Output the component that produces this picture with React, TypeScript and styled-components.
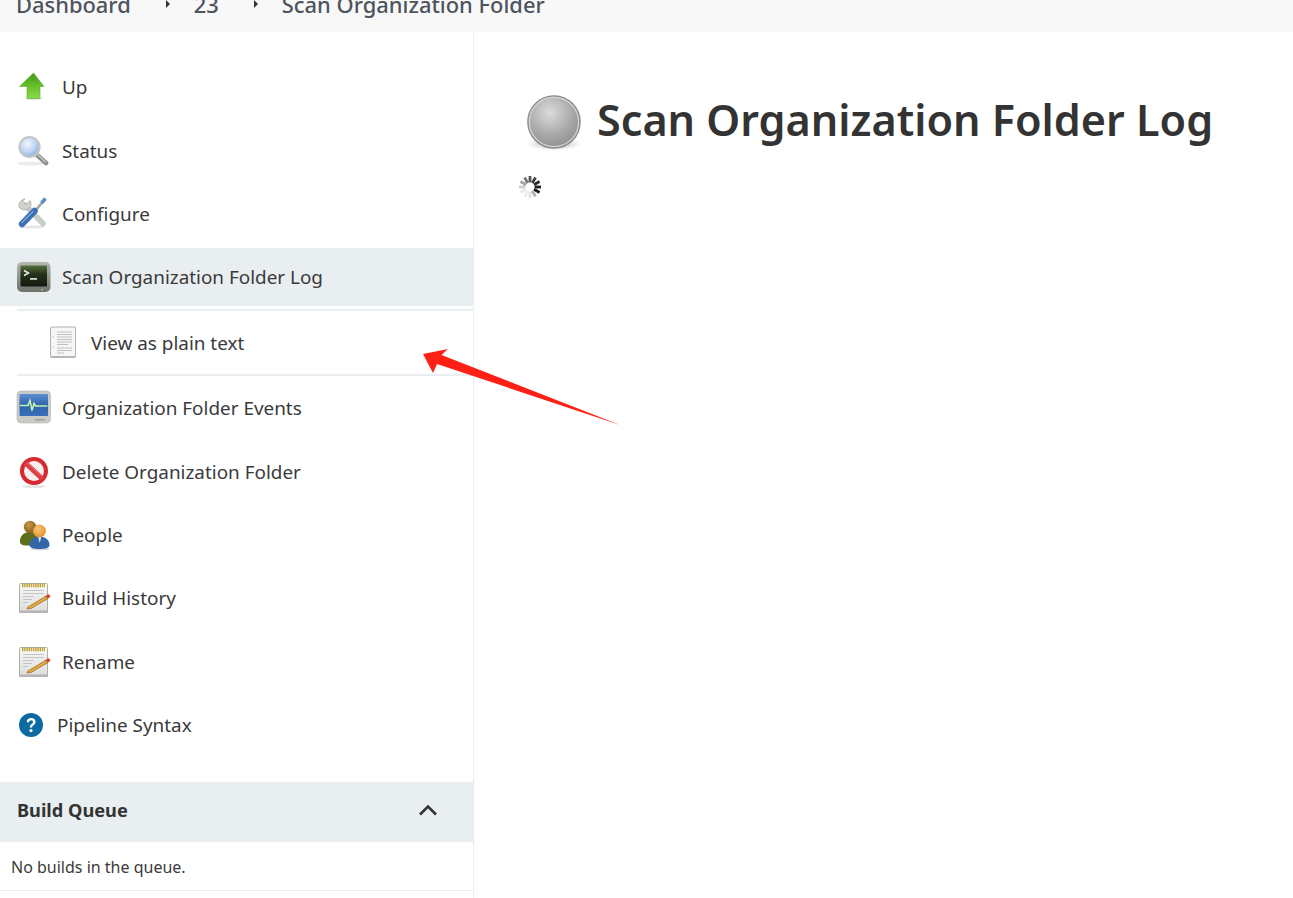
import React from 'react';
import styled, { createGlobalStyle } from 'styled-components';

const GlobalStyle = createGlobalStyle`
  html, body {
    margin: 0;
    height: 100%;
    overflow: hidden;
    background: #fff;
  }
  body {
    font-family: 'Noto Sans', 'Liberation Sans', sans-serif;
    color: #333;
  }
`;

const Page = styled.div`
  position: relative;
  width: 1293px;
  height: 898px;
  overflow: hidden;
`;

const Breadcrumbs = styled.div`
  height: 32px;
  box-sizing: border-box;
  background: #f8f8f8;
  display: flex;
  align-items: flex-end;
  padding: 0 0 11px 16px;
  font-size: 21.9px;
  font-weight: 500;
  line-height: 32px;
  color: #4d545d;
`;

const Crumb = styled.span`
  white-space: nowrap;
`;

const CrumbArrow = styled.span`
  align-self: flex-start;
  width: 0;
  height: 0;
  margin: 0 ${(p: { $after: number }) => p.$after}px 0 35px;
  border-left: 4px solid #333;
  border-top: 4px solid transparent;
  border-bottom: 4px solid transparent;
`;

const Main = styled.div`
  display: flex;
  height: 866px;
`;

const Sidebar = styled.aside`
  width: 474px;
  flex: none;
  box-sizing: border-box;
  border-right: 1px solid #e9eef1;
  padding-top: 26.2px;
`;

const Task = styled.div<{ $active?: boolean; $narrow?: boolean }>`
  height: ${(p) => (p.$narrow ? 57 : 58)}px;
  margin-bottom: 5.35px;
  display: flex;
  align-items: center;
  gap: ${(p) => (p.$narrow ? 14 : 10)}px;
  padding-left: ${(p) => (p.$narrow ? 19 : 16)}px;
  background: ${(p) => (p.$active ? '#e9eef1' : 'transparent')};
  font-size: 18.9px;
  color: #3a3a3a;
`;

const SubTasks = styled.div`
  box-sizing: border-box;
  margin: -2.35px 0 3.2px 17px;
  height: 67px;
  border-top: 2px solid #e9eef1;
  border-bottom: 2px solid #e9eef1;
  display: flex;
  align-items: center;
  gap: 14px;
  padding-left: 32px;
  font-size: 18.9px;
  color: #3a3a3a;
`;

const QueueHeader = styled.div`
  box-sizing: border-box;
  margin-top: 29px;
  height: 60px;
  padding: 0 35px 4px 17px;
  background: #e9eef1;
  display: flex;
  align-items: center;
  justify-content: space-between;
  font-size: 18.2px;
  font-weight: 700;
`;

const QueueBody = styled.div`
  box-sizing: border-box;
  height: 49px;
  padding: 2px 0 0 11px;
  border-bottom: 1px solid #e9eef1;
  display: flex;
  align-items: center;
  font-size: 16px;
  color: #3a3a3a;
`;

const Content = styled.main`
  flex: 1;
  padding: 50px 0 0 50px;
`;

const Title = styled.h1`
  margin: 0;
  display: flex;
  align-items: center;
  gap: 13px;
  font-size: 43.15px;
  font-weight: 600;
  line-height: 76px;
  color: #333;
`;

const Spinner = styled.div`
  margin: 17px 0 0 -6px;
  width: 24px;
  height: 24px;
  filter: blur(0.4px);
`;

const Annotation = styled.svg`
  position: absolute;
  left: 420px;
  top: 345px;
`;

const Svg = styled.svg`
  flex: none;
  display: block;
`;

// raster-looking icons: the originals are upscaled bitmaps, so a touch of blur
const Bitmap = styled(Svg)`
  filter: blur(0.5px);
`;

const UpIcon = () => (
  <Bitmap width="36" height="36" viewBox="0 0 36 36">
    <defs>
      <linearGradient id="up" x1="0" y1="0" x2="0" y2="1">
        <stop offset="0" stopColor="#3f9a1c" />
        <stop offset="0.55" stopColor="#6cc22c" />
        <stop offset="1" stopColor="#8bd84a" />
      </linearGradient>
    </defs>
    <ellipse cx="18" cy="29.5" rx="9" ry="1.5" fill="#000" opacity="0.12" />
    <path d="M17.5 4 L28 17.5 H24 V29.5 H11 V17.5 H3.5 Z" fill="url(#up)" stroke="#5aa92a" strokeWidth="0.6" />
  </Bitmap>
);

const StatusIcon = () => (
  <Bitmap width="36" height="36" viewBox="0 0 36 36">
    <defs>
      <radialGradient id="lens" cx="0.4" cy="0.35" r="0.7">
        <stop offset="0" stopColor="#f2f7fd" />
        <stop offset="0.6" stopColor="#bcd3f2" />
        <stop offset="1" stopColor="#7fa6de" />
      </radialGradient>
    </defs>
    <ellipse cx="15" cy="30.5" rx="14" ry="2" fill="#000" opacity="0.08" />
    <path d="M21 22 L30 30" stroke="#8a8c88" strokeWidth="4.6" strokeLinecap="round" />
    <path d="M21.5 21.5 L29.5 29" stroke="#c6c8c3" strokeWidth="1.4" strokeLinecap="round" />
    <circle cx="13.5" cy="14" r="10" fill="url(#lens)" stroke="#c3c6c4" strokeWidth="2.2" />
  </Bitmap>
);

const ConfigureIcon = () => (
  <Bitmap width="36" height="36" viewBox="0 0 36 36">
    <ellipse cx="16" cy="31" rx="13" ry="1.6" fill="#000" opacity="0.1" />
    <path d="M9 9 L27 27.5" stroke="#c9ccc7" strokeWidth="5.6" strokeLinecap="round" />
    <path
      d="M8 3 A6.8 6.8 0 0 0 3 11 A6.8 6.8 0 0 0 12 13 L15 9.5 A6.8 6.8 0 0 0 14 4.5 L10 8.5 L6.5 6 L9 3 Z"
      fill="#cfd2cd"
      stroke="#a4a7a2"
      strokeWidth="0.7"
    />
    <path d="M29 3 L20 14" stroke="#a2a5a1" strokeWidth="2.6" />
    <path d="M29.5 2.5 L25.5 7" stroke="#5c8fca" strokeWidth="3.4" />
    <path d="M18.5 15 L6 28" stroke="#3a70b4" strokeWidth="6.4" strokeLinecap="round" />
    <path d="M17 15.5 L6 26.5" stroke="#82aada" strokeWidth="1.3" strokeLinecap="round" />
  </Bitmap>
);

const TerminalIcon = () => (
  <Bitmap width="36" height="36" viewBox="0 0 36 36">
    <defs>
      <linearGradient id="term-frame" x1="0" y1="0" x2="0" y2="1">
        <stop offset="0" stopColor="#b4b6b0" />
        <stop offset="1" stopColor="#6f716c" />
      </linearGradient>
      <linearGradient id="term-screen" x1="0" y1="0" x2="0" y2="1">
        <stop offset="0" stopColor="#55703c" />
        <stop offset="0.4" stopColor="#26331a" />
        <stop offset="1" stopColor="#141a11" />
      </linearGradient>
    </defs>
    <rect x="1" y="3" width="33.5" height="30" rx="5" fill="url(#term-frame)" />
    <rect x="4.5" y="6.5" width="26.5" height="21" rx="1" fill="url(#term-screen)" />
    <path d="M8 11.5 L12.5 14 L8 16.5" fill="none" stroke="#e8ece2" strokeWidth="1.5" />
    <rect x="14" y="19" width="7" height="1.8" fill="#cfd6c6" />
    <rect x="25" y="30" width="2" height="1.3" fill="#86d04a" />
  </Bitmap>
);

const DocIcon = () => (
  <Bitmap width="28" height="34" viewBox="0 0 28 34">
    <rect x="1.5" y="1" width="25" height="30" rx="1" fill="#f6f6f5" stroke="#b0b1ae" />
    <path d="M1.5 31 H26.5" stroke="#a9aaa7" strokeWidth="1.4" />
    <path
      d="M8 6 H23 M8 8.5 H23 M8 11 H23 M8 13.5 H23 M8 16 H23 M8 18.5 H19 M8 22 H23 M8 24.5 H23 M8 27 H15"
      stroke="#c0c1be"
      strokeWidth="1.2"
    />
    <circle cx="4.2" cy="11" r="0.7" fill="#bdbdbd" />
    <circle cx="4.2" cy="21" r="0.7" fill="#bdbdbd" />
  </Bitmap>
);

const EventsIcon = () => (
  <Bitmap width="36" height="36" viewBox="0 0 36 36">
    <defs>
      <linearGradient id="ev-screen" x1="0" y1="0" x2="0" y2="1">
        <stop offset="0" stopColor="#5d8fd0" />
        <stop offset="0.5" stopColor="#2f63ad" />
        <stop offset="1" stopColor="#3a70b8" />
      </linearGradient>
    </defs>
    <rect x="1" y="1" width="33.5" height="32" rx="4" fill="#c9cbc6" stroke="#b4b6b1" strokeWidth="0.6" />
    <rect x="3.5" y="4" width="28.5" height="22" rx="1" fill="url(#ev-screen)" />
    <path d="M4 15.5 H12 L14 10.5 L16 20.5 L18 13.5 L19.5 16 H31.5" fill="none" stroke="#c6f0b4" strokeWidth="1.6" />
    <rect x="19" y="29" width="10" height="1.5" fill="#9fa19c" />
  </Bitmap>
);

const DeleteIcon = () => (
  <Bitmap width="36" height="36" viewBox="0 0 36 36">
    <ellipse cx="18" cy="32.5" rx="12" ry="1.6" fill="#000" opacity="0.1" />
    <circle cx="18" cy="17" r="12" fill="#fbeeee" stroke="#d42a30" strokeWidth="4" />
    <path d="M9.5 9 L26.5 25" stroke="#dc3c42" strokeWidth="5" />
    <path d="M11 8.5 L25.5 22" stroke="#f0a0a2" strokeWidth="1" opacity="0.6" />
  </Bitmap>
);

const PeopleIcon = () => (
  <Bitmap width="36" height="36" viewBox="0 0 36 36">
    <defs>
      <radialGradient id="head-a" cx="0.4" cy="0.35" r="0.7">
        <stop offset="0" stopColor="#c49a4e" />
        <stop offset="1" stopColor="#8a5a18" />
      </radialGradient>
      <radialGradient id="head-b" cx="0.4" cy="0.35" r="0.7">
        <stop offset="0" stopColor="#f6c878" />
        <stop offset="1" stopColor="#e1902a" />
      </radialGradient>
    </defs>
    <ellipse cx="24" cy="32" rx="10" ry="1.3" fill="#000" opacity="0.15" />
    <path d="M4 25 C3.5 19 8 15 14 15 C19 15 24 18 24 24 C24 27 19 28.5 13 28.5 C8 28.5 4 28 4 25 Z" fill="#5d6f1c" />
    <circle cx="14" cy="10" r="6.2" fill="url(#head-a)" />
    <path d="M13.5 28 C13.5 23 18 19.5 23.5 19.5 C29 19.5 33.5 23 33.5 28 C33.5 31 29 32 23.5 32 C18 32 13.5 31 13.5 28 Z" fill="#3166a8" />
    <path d="M22 19.5 L23.7 26 L25.4 19.5 Z" fill="#dfe8f2" />
    <circle cx="23.5" cy="14" r="6.4" fill="url(#head-b)" />
  </Bitmap>
);

const NotepadIcon = () => (
  <Bitmap width="36" height="36" viewBox="0 0 36 36">
    <defs>
      <linearGradient id="pad" x1="0" y1="0" x2="0" y2="1">
        <stop offset="0" stopColor="#fafafa" />
        <stop offset="1" stopColor="#dcdcda" />
      </linearGradient>
    </defs>
    <rect x="3.5" y="3.5" width="28" height="29" rx="1" fill="url(#pad)" stroke="#acaeaa" />
    <rect x="3.5" y="30.5" width="28.5" height="2.5" fill="#b4b5b1" />
    <path d="M6 5.5 H29" stroke="#bfa02a" strokeWidth="3.4" strokeDasharray="1.4 0.8" />
    <path d="M7 10.5 H28 M7 13.5 H28 M7 16.5 H18 M7 19.5 H16 M7 22.5 H12" stroke="#c3c4c1" strokeWidth="1" />
    <path d="M12 27 L30 16 L32 18.5 L15 28.5 L11 29 Z" fill="#e5a93c" stroke="#8a6420" strokeWidth="0.7" />
    <path d="M29.5 16 L32.5 14 L34.5 16.5 L32 18.5 Z" fill="#dc3a30" />
  </Bitmap>
);

const HelpIcon = () => (
  <Svg width="24" height="24" viewBox="0 0 24 24">
    <circle cx="12" cy="12" r="12" fill="#0b6aa2" />
    <path
      d="M7.6 9.2 C7.7 6.6 9.6 5 12.1 5 C14.8 5 16.6 6.5 16.6 8.8 C16.6 10.5 15.7 11.4 14.5 12.3 C13.5 13 13.2 13.5 13.2 14.6 H10.8 C10.8 13 11.3 12 12.6 11.1 C13.6 10.4 14 9.9 14 9 C14 8 13.3 7.2 12.1 7.2 C10.9 7.2 10.1 8 10 9.2 Z"
      fill="#fff"
    />
    <circle cx="12" cy="17.6" r="1.6" fill="#fff" />
  </Svg>
);

const ChevronUp = () => (
  <Svg width="20" height="12" viewBox="0 0 20 12">
    <path d="M2 10.5 L10 2.5 L18 10.5" fill="none" stroke="#333" strokeWidth="2.6" />
  </Svg>
);

const BallIcon = () => (
  <Bitmap width="60" height="62" viewBox="0 -5 60 62">
    <defs>
      <radialGradient id="ball" cx="0.42" cy="0.32" r="0.72">
        <stop offset="0" stopColor="#dcdcdc" />
        <stop offset="0.6" stopColor="#a8a8a8" />
        <stop offset="1" stopColor="#8e8e8e" />
      </radialGradient>
      <radialGradient id="ball-shadow">
        <stop offset="0" stopColor="#000" stopOpacity="0.28" />
        <stop offset="1" stopColor="#000" stopOpacity="0" />
      </radialGradient>
    </defs>
    <ellipse cx="30" cy="50" rx="28" ry="6.5" fill="url(#ball-shadow)" />
    <circle cx="30" cy="28" r="26.2" fill="url(#ball)" stroke="#8d8d8d" strokeWidth="1.2" />
    <circle cx="30" cy="28" r="24.6" fill="none" stroke="#d4d4d4" strokeWidth="1.2" />
  </Bitmap>
);

const SpinnerIcon = () => {
  // 12 spokes fading round from the dark right-hand side
  const spokes = Array.from({ length: 12 }, (_, i) => i);
  return (
    <Svg width="24" height="24" viewBox="0 0 24 24">
      {spokes.map((i) => (
        <rect
          key={i}
          x="10.6"
          y="1"
          width="2.8"
          height="6.4"
          fill="#1c1c1c"
          opacity={[0.75, 0.85, 0.95, 1, 1, 0.35, 0.12, 0.08, 0.1, 0.22, 0.4, 0.6][i]}
          transform={`rotate(${i * 30} 12 12)`}
        />
      ))}
    </Svg>
  );
};

const tasksBefore = [
  { label: 'Up', icon: <UpIcon /> },
  { label: 'Status', icon: <StatusIcon /> },
  { label: 'Configure', icon: <ConfigureIcon /> },
];

const tasksAfter = [
  { label: 'Organization Folder Events', icon: <EventsIcon /> },
  { label: 'Delete Organization Folder', icon: <DeleteIcon /> },
  { label: 'People', icon: <PeopleIcon /> },
  { label: 'Build History', icon: <NotepadIcon /> },
  { label: 'Rename', icon: <NotepadIcon /> },
];

const App = () => (
  <Page>
    <GlobalStyle />
    <Breadcrumbs>
      <Crumb>Dashboard</Crumb>
      <CrumbArrow $after={24} />
      <Crumb>23</Crumb>
      <CrumbArrow $after={24} />
      <Crumb>Scan Organization Folder</Crumb>
    </Breadcrumbs>
    <Main>
      <Sidebar>
        {tasksBefore.map((t) => (
          <Task key={t.label}>
            {t.icon}
            {t.label}
          </Task>
        ))}
        <Task $active>
          <TerminalIcon />
          Scan Organization Folder Log
        </Task>
        <SubTasks>
          <DocIcon />
          View as plain text
        </SubTasks>
        {tasksAfter.map((t) => (
          <Task key={t.label}>
            {t.icon}
            {t.label}
          </Task>
        ))}
        <Task $narrow>
          <HelpIcon />
          Pipeline Syntax
        </Task>
        <QueueHeader>
          Build Queue
          <ChevronUp />
        </QueueHeader>
        <QueueBody>No builds in the queue.</QueueBody>
      </Sidebar>
      <Content>
        <Title>
          <BallIcon />
          Scan Organization Folder Log
        </Title>
        <Spinner>
          <SpinnerIcon />
        </Spinner>
      </Content>
    </Main>
    <Annotation width="205" height="85" viewBox="0 0 205 85">
      <path d="M3 9 L28 4 L21.5 10 L200 80 L17 19 L13 28 Z" fill="#fe2015" />
    </Annotation>
  </Page>
);

export default App;
